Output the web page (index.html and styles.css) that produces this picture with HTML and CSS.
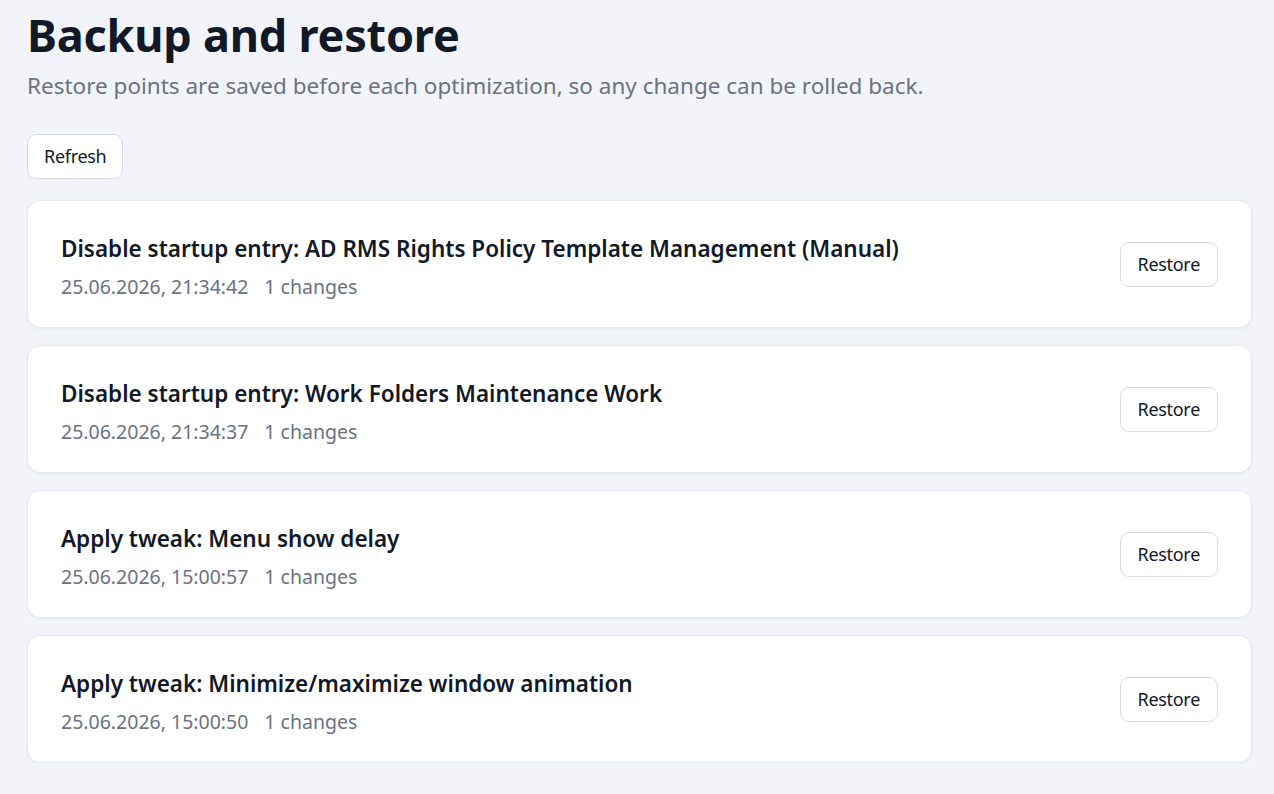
FILE: index.html
```html
<!DOCTYPE html>
<html lang="en">
<head>
<meta charset="utf-8">
<title>Backup and restore</title>
<link rel="stylesheet" href="styles.css">
</head>
<body>
<main class="page">
  <header class="head">
    <h1 class="title">Backup and restore</h1>
    <p class="subtitle">Restore points are saved before each optimization, so any change can be rolled back.</p>
  </header>
  <div class="toolbar">
    <button class="btn">Refresh</button>
  </div>
  <ul class="list">
    <li class="card">
      <div class="info">
        <div class="name">Disable startup entry: AD RMS Rights Policy Template Management (Manual)</div>
        <div class="meta"><span>25.06.2026, 21:34:42</span><span>1 changes</span></div>
      </div>
      <button class="btn">Restore</button>
    </li>
    <li class="card">
      <div class="info">
        <div class="name">Disable startup entry: Work Folders Maintenance Work</div>
        <div class="meta"><span>25.06.2026, 21:34:37</span><span>1 changes</span></div>
      </div>
      <button class="btn">Restore</button>
    </li>
    <li class="card">
      <div class="info">
        <div class="name">Apply tweak: Menu show delay</div>
        <div class="meta"><span>25.06.2026, 15:00:57</span><span>1 changes</span></div>
      </div>
      <button class="btn">Restore</button>
    </li>
    <li class="card">
      <div class="info">
        <div class="name">Apply tweak: Minimize/maximize window animation</div>
        <div class="meta"><span>25.06.2026, 15:00:50</span><span>1 changes</span></div>
      </div>
      <button class="btn">Restore</button>
    </li>
  </ul>
</main>
</body>
</html>
```

FILE: styles.css
```css
* { box-sizing: border-box; }
html, body {
  margin: 0;
  padding: 0;
  background: #f3f4fa;
}
body {
  font-family: "Noto Sans", "Open Sans", sans-serif;
  color: #111827;
}
.page {
  padding: 0 22px 0 27px;
}
.head {
  padding-top: 4px;
}
.title {
  margin: 0;
  font-size: 45px;
  font-weight: 700;
  line-height: 62px;
  color: #111827;
  letter-spacing: -0.2px;
}
.subtitle {
  margin: 4px 0 0;
  font-size: 22.5px;
  line-height: 32px;
  color: #6b7280;
}
.toolbar {
  margin-top: 32px;
}
.btn {
  font-family: inherit;
  font-size: 18px;
  letter-spacing: -0.3px;
  line-height: 25px;
  color: #111827;
  background: #ffffff;
  border: 1px solid #d9dbe0;
  border-radius: 9px;
  padding: 9px 17px;
  cursor: pointer;
}
.toolbar .btn {
  padding: 9px 16px;
}
.list {
  list-style: none;
  margin: 21px 0 0;
  padding: 0;
  display: flex;
  flex-direction: column;
  gap: 17px;
}
.card {
  display: flex;
  align-items: center;
  justify-content: space-between;
  background: #ffffff;
  border: 1px solid #e7e8ee;
  border-radius: 13px;
  box-shadow: 0 1px 3px rgba(17, 24, 39, 0.05);
  padding: 0 33px;
  height: 128px;
}
.info {
  padding-top: 4px;
}
.name {
  font-size: 22.5px;
  font-weight: 600;
  line-height: 31px;
  color: #111827;
}
.meta {
  margin-top: 9px;
  font-size: 19.5px;
  line-height: 27px;
  color: #6b7280;
  display: flex;
  gap: 16px;
}
```
